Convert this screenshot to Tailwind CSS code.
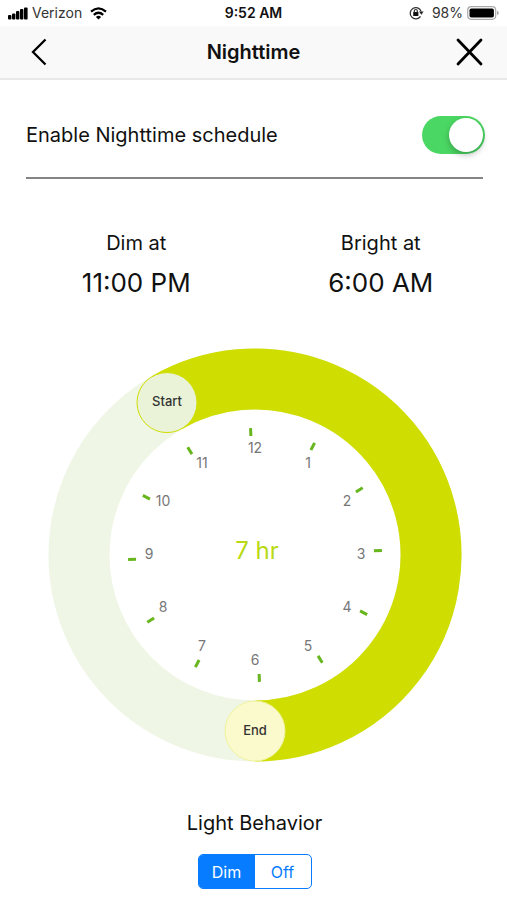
<!DOCTYPE html>
<html lang="en">
<head>
<meta charset="utf-8">
<meta name="viewport" content="width=device-width, initial-scale=1">
<title>Nighttime</title>
<script src="https://cdn.jsdelivr.net/npm/@tailwindcss/browser@4"></script>
</head>
<body class="min-h-screen bg-white font-['Inter',sans-serif] text-[#111]">
  <div class="grid h-[26px] grid-cols-[1fr_auto_1fr] items-center pr-2 pl-2 text-[14px] leading-[26px]">
    <div class="flex items-center gap-1">
      <svg class="h-[13px] w-5" viewBox="0 0 20 13" fill="#000" aria-label="Signal">
        <rect x="0" y="8" width="3.4" height="4.5" rx="1"/><rect x="4" y="6.5" width="3.4" height="6" rx="1"/><rect x="8" y="4" width="3.4" height="8.500" rx="1"/><rect x="12" y="2" width="3.400" height="10.500" rx="1"/><rect x="16" y="0.500" width="3.600" height="12" rx="1"/>
      </svg>
      <span class="text-[#333]">Verizon</span>
      <svg class="ml-1 h-[13px] w-[17px]" viewBox="0 0 17 13" fill="none" stroke="#000" stroke-width="2.200" aria-label="Wi-Fi">
        <path d="M1 4.700Q8.500-1.900 16 4.700"/><path d="M3.800 7.800Q8.500 3.700 13.200 7.800"/><path d="M5.900 9.900Q8.500 7.600 11.100 9.900L8.500 12.600Z" fill="#000" stroke="none"/>
      </svg>
    </div>
    <span class="font-semibold">9:52 AM</span>
    <div class="flex items-center justify-end gap-1">
      <svg class="mr-1 h-[14px] w-[15px]" viewBox="0 0 15 14" fill="none" stroke="#333" aria-label="Rotation lock">
        <path d="M12.100 5.400a5.600 5.600 0 1 0-.6 4.900" stroke-width="1.300"/><path d="M10 5.600h4.600L12.400 8.800Z" fill="#222" stroke="none"/><rect x="4.200" y="6" width="5.200" height="4" rx=".5" fill="#111" stroke="none"/><path d="M5.300 6.500V5a1.500 1.500 0 0 1 3 0v1.500" stroke-width="1.200"/>
      </svg>
      <span class="text-[#333]">98%</span>
      <svg class="h-[14px] w-8" viewBox="0 0 32 14" aria-label="Battery">
        <rect x=".7" y=".7" width="28" height="12.600" rx="3.500" fill="#fff" stroke="#aaa" stroke-width="1.200"/><rect x="2.500" y="2.500" width="24.400" height="9" rx="1.800"/><path d="M30 4.800q1.800.600 1.800 2.200T30 9.200Z" fill="#aaa"/>
      </svg>
    </div>
  </div>

  <header class="grid h-[54px] grid-cols-[1fr_auto_1fr] items-center border-b-2 border-[#e8e8e8] bg-[#f9f9f9] px-5">
    <button type="button" aria-label="Back" class="flex size-9 items-center justify-center">
      <svg class="h-7 w-5" viewBox="0 0 20 28" fill="none" stroke="#000" stroke-width="2.300"><path d="M17.500 1.500 5 14 17.500 26.500"/></svg>
    </button>
    <h1 class="text-[20px] leading-7 font-semibold">Nighttime</h1>
    <button type="button" aria-label="Close" class="flex size-9 items-center justify-center justify-self-end">
      <svg class="size-7" viewBox="0 0 28 28" fill="none" stroke="#000" stroke-width="2.800" stroke-linecap="round"><path d="M3 2 26 26M26 2 3 26"/></svg>
    </button>
  </header>

  <main class="pr-6 pl-[26px]">
    <div class="flex h-[99px] items-center justify-between border-b-2 border-[#858585] pt-3">
      <label for="schedule" class="text-[20px] leading-7">Enable Nighttime schedule</label>
      <input id="schedule" type="checkbox" role="switch" checked class="-mr-0.5 h-[38px] w-[63px] appearance-none rounded-full bg-[#d1d1d6] p-0.5 before:block before:size-[34px] before:rounded-full before:bg-white before:shadow-[0_3px_6px_rgba(0,0,0,0.25)] checked:bg-[#4bd763] checked:before:ml-auto">
    </div>

    <dl class="-mr-5 -ml-3 grid grid-cols-2 pt-12 text-center">
      <div>
        <dt class="text-[20px] leading-8">Dim at</dt>
        <dd class="text-[26px] leading-[48px]">11:00 PM</dd>
      </div>
      <div>
        <dt class="text-[20px] leading-8">Bright at</dt>
        <dd class="text-[26px] leading-[48px]">6:00 AM</dd>
      </div>
    </dl>

    <svg class="mx-auto mt-[41px] block w-full max-w-[414px]" viewBox="-207 -207 414 414" role="img" aria-label="Dim from 11 PM to 6 AM">
      <circle r="176" fill="none" stroke="#eff6e5" stroke-width="61"/>
      <path d="M-88-152.400A176 176 0 1 1 0 176" fill="none" stroke="#cfde00" stroke-width="61"/>
      <circle cx="-88" cy="-152.400" r="30" fill="#eaf3d7" stroke="#cfde00"/>
      <circle cx="0" cy="176" r="30" fill="#fbfacd" stroke="#f0f2a0"/>
      <g stroke="#68b61e" stroke-width="3" transform="rotate(-2)">
        <path d="M0-127v8M0 119v8M-127 0h8M119 0h8"/>
        <path d="M0-127v8M0 119v8M-127 0h8M119 0h8" transform="rotate(30)"/>
        <path d="M0-127v8M0 119v8M-127 0h8M119 0h8" transform="rotate(60)"/>
      </g>
      <g class="text-[14px]" fill="#777" text-anchor="middle">
        <text x="0" y="-102">12</text>
        <text x="53" y="-87">1</text>
        <text x="92" y="-49">2</text>
        <text x="106" y="4">3</text>
        <text x="92" y="57">4</text>
        <text x="53" y="96">5</text>
        <text x="0" y="110">6</text>
        <text x="-53" y="96">7</text>
        <text x="-92" y="57">8</text>
        <text x="-106" y="4">9</text>
        <text x="-92" y="-49">10</text>
        <text x="-53" y="-87">11</text>
      </g>
      <g class="text-[13px] font-medium" fill="#333" text-anchor="middle">
        <text x="-88" y="-149">Start</text>
        <text x="0" y="180">End</text>
      </g>
      <text class="text-[24px]" x="2" y="4" fill="#b9d912" text-anchor="middle">7 hr</text>
    </svg>

    <section class="pt-[46px] pb-2">
      <h2 id="behavior-title" class="text-center text-[20px] leading-[30px]">Light Behavior</h2>
      <div role="radiogroup" aria-labelledby="behavior-title" class="mx-auto mt-4 grid h-[35px] w-[114px] grid-cols-2 overflow-hidden rounded-[5px] border border-[#087cff] text-[16px] text-[#087cff]">
        <label class="flex cursor-pointer items-center justify-center has-checked:bg-[#087cff] has-checked:text-white"><input type="radio" name="behavior" value="dim" checked class="sr-only">Dim</label>
        <label class="flex cursor-pointer items-center justify-center has-checked:bg-[#087cff] has-checked:text-white"><input type="radio" name="behavior" value="off" class="sr-only">Off</label>
      </div>
    </section>
  </main>
</body>
</html>
